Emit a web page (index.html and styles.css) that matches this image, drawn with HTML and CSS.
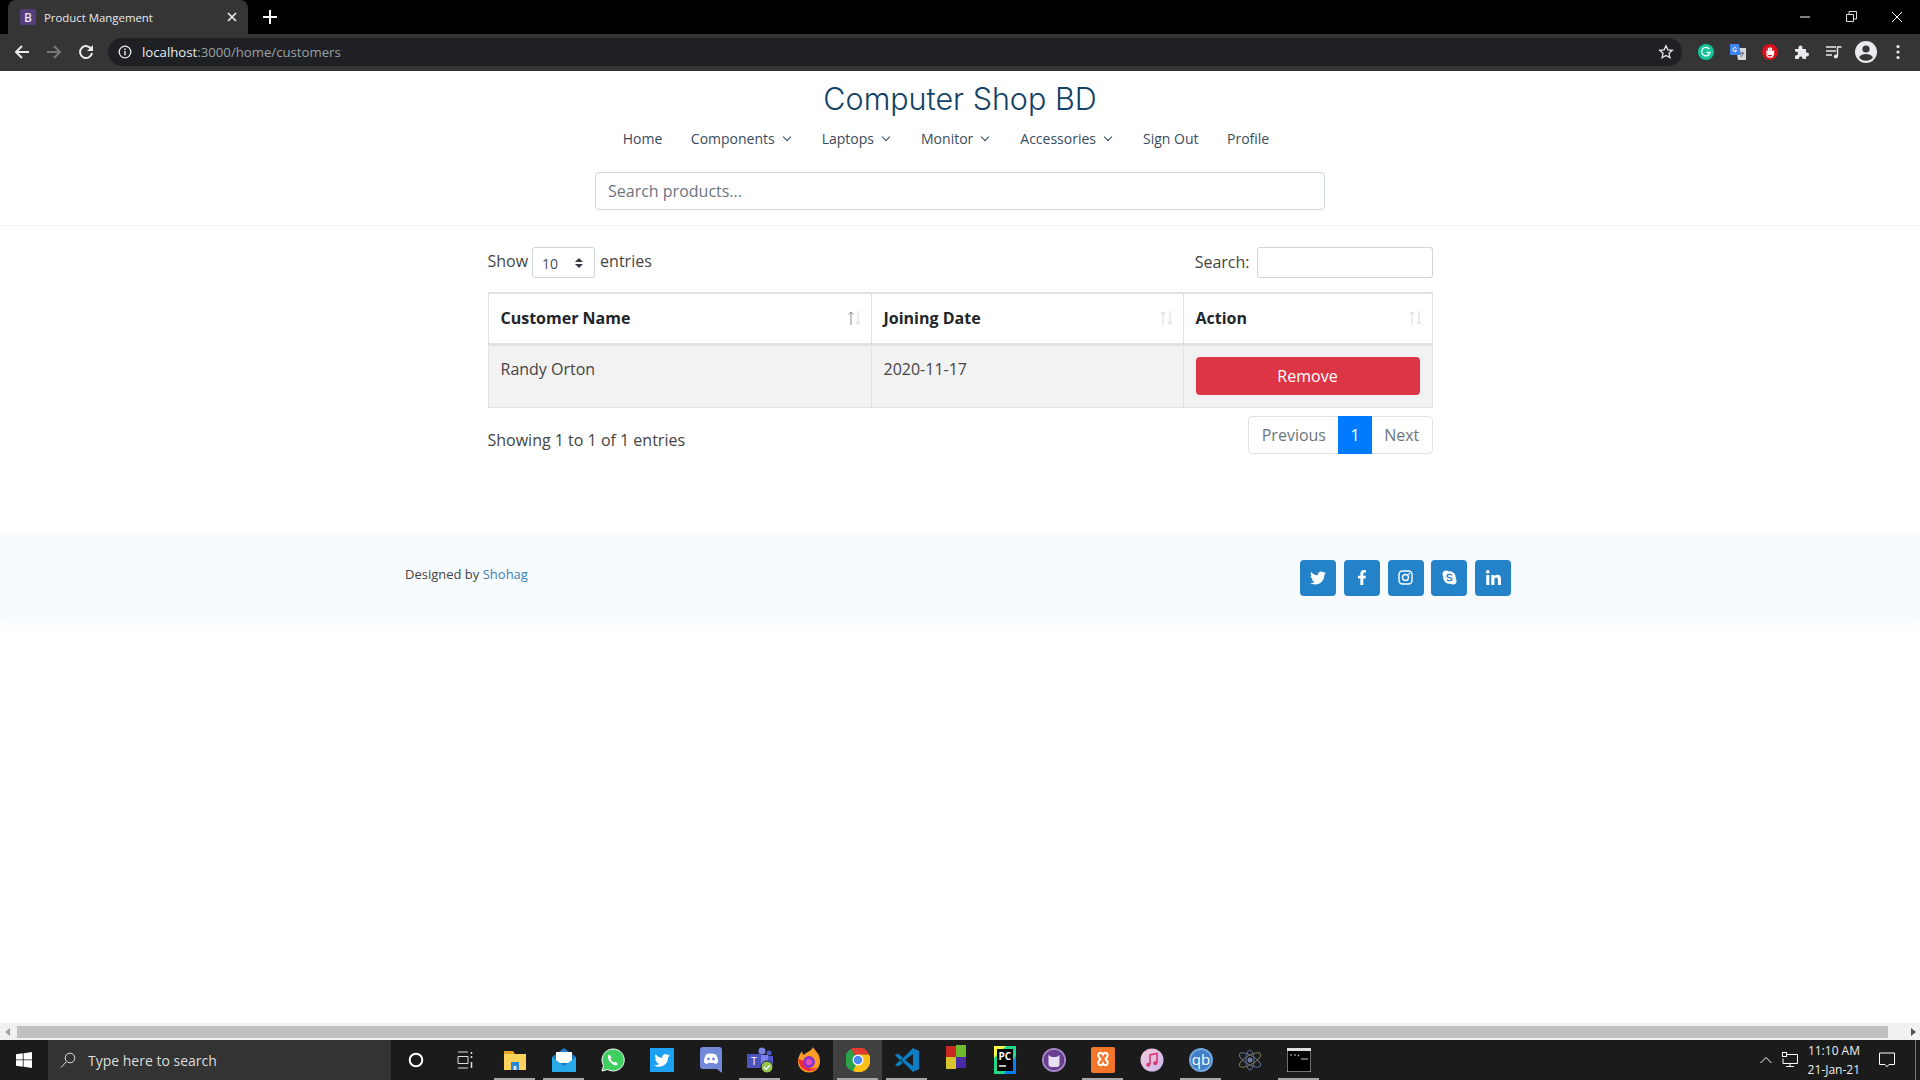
FILE: index.html
```html
<!DOCTYPE html>
<html lang="en">
<head>
    <meta charset="UTF-8">
    <title>Product Mangement</title>
    <link rel="stylesheet" href="styles.css">
</head>
<body>
<div class="screen">
    <!-- browser tabs -->
    <div class="tabstrip">
        <div class="tab">
            <span class="favicon">B</span>
            <span class="tab-title">Product Mangement</span>
            <svg class="tab-close" width="10" height="10" viewBox="0 0 10 10"><path d="M1 1l8 8M9 1l-8 8" stroke="#e8eaed" stroke-width="1.7"/></svg>
        </div>
        <svg class="new-tab" width="14" height="14" viewBox="0 0 14 14"><path d="M7 0v14M0 7h14" stroke="#fff" stroke-width="2"/></svg>
        <div class="window-btns">
            <svg width="46" height="28" viewBox="0 0 46 28"><path d="M18 14h10" stroke="#fff"/></svg>
            <svg width="46" height="28" viewBox="0 0 46 28"><path d="M18.5 18.500h7v-7h-7zM21 11V8.500h7.500v7.500H25.500" fill="none" stroke="#ddd"/></svg>
            <svg width="46" height="28" viewBox="0 0 46 28"><path d="M18 9l10 10M28 9l-10 10" stroke="#fff"/></svg>
        </div>
    </div>

    <!-- browser toolbar -->
    <div class="toolbar">
        <svg class="tool" width="16" height="16" viewBox="0 0 16 16"><path d="M15 8H2M8 2L2 8l6 6" fill="none" stroke="#e8eaed" stroke-width="2"/></svg>
        <svg class="tool" width="16" height="16" viewBox="0 0 16 16"><path d="M1 8h13M8 2l6 6-6 6" fill="none" stroke="#77787a" stroke-width="2"/></svg>
        <svg class="tool" width="16" height="16" viewBox="0 0 16 16"><path d="M13.500 5.500A6 6 0 1 0 14 9" fill="none" stroke="#e8eaed" stroke-width="2"/><path d="M15 1v6H9z" fill="#e8eaed"/></svg>
        <div class="omnibox">
            <svg width="14" height="14" viewBox="0 0 14 14"><circle cx="7" cy="7" r="5.800" fill="none" stroke="#e8eaed" stroke-width="1.300"/><path d="M7 6v4.200M7 3.500v1.500" stroke="#e8eaed" stroke-width="1.500"/></svg>
            <span class="url"><b>localhost</b>:3000/home/customers</span>
            <svg class="star" width="16" height="16" viewBox="0 0 16 16"><path d="M8 1.800l1.900 4 4.400.5-3.300 3 .9 4.400L8 11.500l-3.900 2.200.9-4.400-3.300-3 4.400-.5z" fill="none" stroke="#e8eaed" stroke-width="1.300"/></svg>
        </div>
        <div class="extensions">
            <svg width="16" height="16" viewBox="0 0 16 16"><circle cx="8" cy="8" r="8" fill="#15c39a"/><path d="M11.300 5.200A4.200 4.200 0 1 0 12 8.500H8.500" fill="none" stroke="#fff" stroke-width="1.300"/></svg>
            <svg width="16" height="16" viewBox="0 0 16 16"><path d="M6 4h10v12H8z" fill="#d5d7da"/><path d="M0 0h9l2 11H0z" fill="#4285f4"/><path d="M6.500 4.500a2 2 0 1 0 .2 2H4.800" fill="none" stroke="#fff"/><path d="M10 9h4M12 8v1M11 13l2.500-4" stroke="#666"/></svg>
            <svg width="16" height="16" viewBox="0 0 16 16"><circle cx="8" cy="8" r="8" fill="#d8121c"/><path d="M5 6.500v3.500c0 2 1.200 3.200 3.200 3.200S11 12 11.500 10V6.500M6.500 8V4M8 8V3.200M9.500 8V3.800" stroke="#fff" stroke-width="1.300" fill="none"/><path d="M5.500 7h5.500v4H6z" fill="#fff"/></svg>
            <svg width="16" height="16" viewBox="0 0 16 16"><path d="M1 5h3.500V3.500a2 2 0 0 1 4 0V5H12v3.500h1a2 2 0 0 1 0 4h-1V15H8.500v-1.200a1.800 1.800 0 0 0-3.500 0V15H1v-3.500h1a2 2 0 0 0 0-4H1z" fill="#e8eaed"/></svg>
            <svg width="16" height="16" viewBox="0 0 16 16"><path d="M0 3h10M0 7h10M0 11h6" stroke="#e8eaed" stroke-width="1.400"/><path d="M11.500 12.500V3h4" fill="none" stroke="#e8eaed" stroke-width="1.400"/><circle cx="9.800" cy="12.500" r="2" fill="#e8eaed"/></svg>
            <svg class="avatar" width="22" height="22" viewBox="0 0 22 22"><circle cx="11" cy="11" r="11" fill="#e8eaed"/><circle cx="11" cy="8" r="3.600" fill="#353535"/><path d="M4 16.500c1.500-2.800 4.500-3.600 7-3.600s5.500.8 7 3.600c-1.600 2-4.200 3.300-7 3.300s-5.400-1.300-7-3.300z" fill="#353535"/></svg>
            <svg width="16" height="16" viewBox="0 0 16 16"><circle cx="8" cy="2.500" r="1.600" fill="#e8eaed"/><circle cx="8" cy="8" r="1.600" fill="#e8eaed"/><circle cx="8" cy="13.500" r="1.600" fill="#e8eaed"/></svg>
        </div>
    </div>

    <div class="page">
        <header class="site-header">
            <h1 class="logo">Computer Shop BD</h1>
            <nav class="site-nav">
                <a>Home</a>
                <a class="drop">Components</a>
                <a class="drop">Laptops</a>
                <a class="drop">Monitor</a>
                <a class="drop">Accessories</a>
                <a>Sign Out</a>
                <a>Profile</a>
            </nav>
            <input class="product-search" type="text" placeholder="Search products...">
        </header>

        <main class="customers">
            <div class="dt-top">
                <label class="dt-length">Show
                    <span class="select-wrap">
                        <select><option>10</option></select>
                    </span>
                    entries</label>
                <label class="dt-filter">Search: <input type="text"></label>
            </div>
            <table class="dt-table">
                <thead>
                    <tr>
                        <th class="col-name"><div class="th-in">Customer Name
                            <svg class="sort" width="13" height="14" viewBox="0 0 13 14"><path class="on" d="M3 14V1M.7 3.500L3 1l2.300 2.500"/><path d="M10 0v13M7.700 10.500L10 13l2.300-2.500"/></svg>
                        </div></th>
                        <th class="col-date"><div class="th-in">Joining Date
                            <svg class="sort" width="13" height="14" viewBox="0 0 13 14"><path d="M3 14V1M.7 3.500L3 1l2.300 2.500"/><path d="M10 0v13M7.700 10.500L10 13l2.300-2.500"/></svg>
                        </div></th>
                        <th><div class="th-in">Action
                            <svg class="sort" width="13" height="14" viewBox="0 0 13 14"><path d="M3 14V1M.7 3.500L3 1l2.300 2.500"/><path d="M10 0v13M7.700 10.500L10 13l2.300-2.500"/></svg>
                        </div></th>
                    </tr>
                </thead>
                <tbody>
                    <tr>
                        <td>Randy Orton</td>
                        <td>2020-11-17</td>
                        <td><button class="btn-remove">Remove</button></td>
                    </tr>
                </tbody>
            </table>
            <div class="dt-bottom">
                <div class="dt-info">Showing 1 to 1 of 1 entries</div>
                <ul class="pagination">
                    <li>Previous</li>
                    <li class="active">1</li>
                    <li>Next</li>
                </ul>
            </div>
        </main>

        <footer class="site-footer">
            <div class="footer-in">
                <div class="credits">Designed by <a>Shohag</a></div>
                <div class="social">
                    <a><svg width="16" height="16" viewBox="0 0 512 512"><path d="M459.37 151.716c.325 4.548.325 9.097.325 13.645 0 138.72-105.583 298.558-298.558 298.558-59.452 0-114.68-17.219-161.137-47.106 8.447.974 16.568 1.299 25.34 1.299 49.055 0 94.213-16.568 130.274-44.832-46.132-.975-84.792-31.188-98.112-72.772 6.498.974 12.995 1.624 19.818 1.624 9.421 0 18.843-1.3 27.614-3.573-48.081-9.747-84.143-51.98-84.143-102.985v-1.299c13.969 7.797 30.214 12.67 47.431 13.319-28.264-18.843-46.781-51.005-46.781-87.391 0-19.492 5.197-37.36 14.294-52.954 51.655 63.675 129.3 105.258 216.365 109.807-1.624-7.797-2.599-15.918-2.599-24.04 0-57.828 46.782-104.934 104.934-104.934 30.213 0 57.502 12.67 76.67 33.137 23.715-4.548 46.456-13.32 66.599-25.34-7.798 24.366-24.366 44.833-46.132 57.827 21.117-2.273 41.584-8.122 60.426-16.243-14.292 20.791-32.161 39.308-52.628 54.253z" fill="#fff"/></svg></a>
                    <a><svg width="10" height="15" viewBox="0 0 320 512"><path d="M279.14 288l14.22-92.66h-88.91v-60.13c0-25.35 12.42-50.06 52.24-50.06h40.42V6.26S260.43 0 225.36 0c-73.22 0-121.08 44.38-121.08 124.72v70.62H22.89V288h81.39v224h100.17V288z" fill="#fff"/></svg></a>
                    <a><svg width="15" height="15" viewBox="0 0 15 15"><rect x="1" y="1" width="13" height="13" rx="3.500" fill="none" stroke="#fff" stroke-width="1.400"/><circle cx="7.500" cy="7.500" r="3" fill="none" stroke="#fff" stroke-width="1.400"/><circle cx="11.300" cy="3.700" r=".9" fill="#fff"/></svg></a>
                    <a><svg width="15" height="15" viewBox="0 0 15 15"><circle cx="7.500" cy="7.500" r="6.300" fill="#fff"/><circle cx="4" cy="4" r="3.500" fill="#fff"/><circle cx="11" cy="11" r="3.500" fill="#fff"/><path d="M10 5.300C9 4.200 5 4 5 6c0 2.200 5 1 5 3.200 0 1.900-4 1.800-5.100.5" fill="none" stroke="#2482c9" stroke-width="1.300"/></svg></a>
                    <a><svg width="15" height="15" viewBox="0 0 448 448"><path d="M100.28 448H7.4V148.9h92.88zM53.79 108.1C24.09 108.1 0 83.5 0 53.8a53.79 53.79 0 0 1 107.58 0c0 29.7-24.1 54.3-53.79 54.3zM447.9 448h-92.68V302.4c0-34.7-.7-79.2-48.29-79.2-48.29 0-55.69 37.7-55.69 76.7V448h-92.78V148.9h89.08v40.8h1.3c12.4-23.5 42.69-48.3 87.88-48.3 94 0 111.28 61.9 111.28 142.3V448z" fill="#fff"/></svg></a>
                </div>
            </div>
        </footer>
    </div>

    <div class="hscroll">
        <span class="arrow-l"></span>
        <div class="hscroll-thumb"></div>
        <span class="arrow-r"></span>
    </div>

    <!-- windows taskbar -->
    <div class="taskbar">
        <svg class="win-logo" width="16" height="16" viewBox="0 0 16 16"><path d="M0 2.300l6.800-1v6.200H0zM7.600 1.200L16 0v7.500H7.600zM0 8.300h6.800v6.400l-6.800-1zM7.600 8.300H16V16l-8.400-1.200z" fill="#fff"/></svg>
        <div class="task-search">
            <svg width="16" height="16" viewBox="0 0 16 16"><circle cx="10" cy="6" r="4.800" fill="none" stroke="#ddd"/><path d="M6.500 9.500L1 15.500" stroke="#ddd"/></svg>
            <span>Type here to search</span>
        </div>
        <div class="task-sys">
            <svg width="16" height="16" viewBox="0 0 16 16"><circle cx="8" cy="8" r="6.300" fill="none" stroke="#fff" stroke-width="2"/></svg>
        </div>
        <div class="task-sys">
            <svg width="16" height="18" viewBox="0 0 16 18"><path d="M1 1h10M1 17h10M1 5.500h10v7H1z" fill="none" stroke="#ddd"/><path d="M14.500 1v2M14.500 5v2M14.500 11v6" stroke="#ddd" stroke-width="1.500"/></svg>
        </div>
        <div class="task-apps">
            <div class="app run"><svg width="24" height="24" viewBox="0 0 24 24"><path d="M1 3h9l2 3H1z" fill="#e8a825"/><path d="M1 6h22v16H1z" fill="#fbd35c"/><path d="M8 14h8v8H8z" fill="#2a86d8"/><path d="M10.500 18h3v4h-3z" fill="#cbe4f6"/></svg></div>
            <div class="app run"><svg width="26" height="24" viewBox="0 0 26 24"><path d="M13 0L1 9v15h24V9z" fill="#1f7ac2"/><path d="M5 4h16v11H5z" fill="#fff"/><path d="M1 9l12 9 12-9v15H1z" fill="#29a8ea"/></svg></div>
            <div class="app"><svg width="24" height="24" viewBox="0 0 24 24"><path d="M12 1a11 11 0 0 0-9.500 16.500L1 23l5.700-1.500A11 11 0 1 0 12 1z" fill="#3ecf5e" stroke="#fff"/><path d="M8 6.500c-2 2-1 5 1.500 7.800s5.500 4 7.500 2l-2.200-2.500-1.800.8c-1.500-.8-2.800-2.200-3.500-3.800l1-1.600z" fill="#fff"/></svg></div>
            <div class="app"><svg width="24" height="24" viewBox="0 0 24 24"><rect width="24" height="24" fill="#1da1f2"/><path d="M20 7.500c-.6.300-1.200.4-1.800.5.700-.4 1.200-1 1.400-1.800-.6.400-1.300.7-2 .8a3.200 3.200 0 0 0-5.400 2.900A9 9 0 0 1 5.600 6.600a3.200 3.200 0 0 0 1 4.200c-.5 0-1-.2-1.400-.4 0 1.600 1.100 2.900 2.500 3.200-.5.100-1 .1-1.400 0 .4 1.300 1.600 2.200 3 2.200A6.400 6.400 0 0 1 4 17.200 9 9 0 0 0 18 9.200c.8-.4 1.500-1 2-1.700z" fill="#fff"/></svg></div>
            <div class="app"><svg width="22" height="26" viewBox="0 0 22 26"><path d="M3 0h16a3 3 0 0 1 3 3v23l-5-4H3a3 3 0 0 1-3-3V3a3 3 0 0 1 3-3z" fill="#7289da"/><path d="M6 7.500c3-1.400 7-1.400 10 0 1.500 2.500 2 5 2 8-1 .8-2.200 1.200-3.300 1.500l-.8-1.300c-1.800.5-3.900.5-5.800 0L7.300 17C6.200 16.700 5 16.300 4 15.500c0-3 .5-5.500 2-8z" fill="#fff"/><circle cx="8.500" cy="12" r="1.400" fill="#7289da"/><circle cx="13.500" cy="12" r="1.400" fill="#7289da"/></svg></div>
            <div class="app run"><svg width="28" height="28" viewBox="0 0 28 28"><circle cx="16" cy="5" r="3.500" fill="#7b83eb"/><circle cx="23" cy="7" r="2.500" fill="#5059c9"/><path d="M10 9h12v13H10z" fill="#7b83eb"/><path d="M22 10h5v9h-5z" fill="#5059c9"/><rect x="1" y="8" width="14" height="14" fill="#4b53bc"/><text class="ico-t" x="8" y="19" text-anchor="middle" font-size="11">T</text><circle cx="21" cy="21" r="6" fill="#92c353" stroke="#1b1b1b"/><path d="M18 21l2.200 2.200 3.800-4" fill="none" stroke="#fff" stroke-width="1.400"/></svg></div>
            <div class="app"><svg width="24" height="26" viewBox="0 0 24 26"><path d="M16 0c1 3 7 6 7 14a11 11 0 0 1-22 1C1 9 4 6 5 4c0 2 1 3 2 4 2-3 8-4 9-8z" fill="#ff9c25"/><path d="M1.500 12c0 7 5 12 11 12 3 0 6-1 8-4-3 2-6 2-8 1-3-1-4-4-3-6z" fill="#f5273f"/><circle cx="12" cy="15" r="6" fill="#8b33c4"/><circle cx="12" cy="15" r="3" fill="#e34fbb"/></svg></div>
            <div class="app run current"><svg width="24" height="24" viewBox="0 0 24 24"><path d="M12 12L5 1a12 12 0 0 1 18 5.500H12z" fill="#e33b2e"/><path d="M12 12L5 1A12 12 0 0 0 7 23l5-11z" fill="#2ba14b"/><path d="M12 6.500h11A12 12 0 0 1 7 23l5-11z" fill="#fbc116"/><circle cx="12" cy="12" r="5.500" fill="#fff"/><circle cx="12" cy="12" r="4.300" fill="#4a8af4"/></svg></div>
            <div class="app run"><svg width="26" height="26" viewBox="0 0 26 26"><path d="M19 1L7 13l12 12 6-3V4z" fill="#0b7ec4"/><path d="M19 7v12l-8-6z" fill="#1b1b1b"/><path d="M1 8l3-1.500 5 4-3 3zM6 13.500l3 2.500-5 3.500L1 18z" fill="#0b7ec4"/></svg></div>
            <div class="app"><svg width="22" height="30" viewBox="0 0 22 30"><path d="M1 1h10v11H1z" fill="#c8281f"/><path d="M11 0h10v12H11z" fill="#6fbb2d"/><path d="M1 12h10v12H1z" fill="#d6c52b"/><path d="M11 12h10v11H11z" fill="#4b2aa8"/></svg></div>
            <div class="app"><svg width="22" height="28" viewBox="0 0 22 28"><path d="M0 0h22v28H0z" fill="#21d789"/><path d="M0 0h12L0 12z" fill="#fcf84a"/><path d="M22 10v18H10z" fill="#087cfa"/><rect x="3" y="3" width="16" height="22" fill="#000"/><text class="ico-t" x="4.500" y="14" font-size="10" font-weight="700">PC</text><path d="M5 20h7" stroke="#fff" stroke-width="1.500"/></svg></div>
            <div class="app"><svg width="24" height="24" viewBox="0 0 24 24"><circle cx="12" cy="12" r="11" fill="#1b1b1b" stroke="#a987c9" stroke-width="2"/><circle cx="12" cy="12" r="10" fill="#6a3f94"/><path d="M6.500 7l3 2h5l3-2v9a3 3 0 0 1-3 3h-5a3 3 0 0 1-3-3z" fill="#e9e0f1"/></svg></div>
            <div class="app run"><svg width="24" height="28" viewBox="0 0 24 28"><rect y="1" width="24" height="26" rx="2" fill="#f3772a"/><path d="M8 7.500a2.500 2.500 0 0 1 4 1 2.500 2.500 0 0 1 4-1c1.500 1.500.5 3.500-1.500 5.500 2 2 3 4 1.500 5.500a2.500 2.500 0 0 1-4-1 2.500 2.500 0 0 1-4 1c-1.500-1.500-.5-3.500 1.500-5.500-2-2-3-4-1.500-5.500z" fill="none" stroke="#fff" stroke-width="2"/></svg></div>
            <div class="app"><svg width="24" height="24" viewBox="0 0 24 24"><defs><linearGradient id="tunes" x1="0" y1="0" x2="1" y2="1"><stop offset="0" stop-color="#f9c8d8"/><stop offset="1" stop-color="#c9b8f0"/></linearGradient></defs><circle cx="12" cy="12" r="11.500" fill="url(#tunes)"/><path d="M10 16.500V7l7-1.500V15" fill="none" stroke="#d9366e" stroke-width="1.600"/><circle cx="8.300" cy="16.700" r="2" fill="#d9366e"/><circle cx="15.300" cy="15.200" r="2" fill="#d9366e"/></svg></div>
            <div class="app run"><svg width="24" height="24" viewBox="0 0 24 24"><circle cx="12" cy="12" r="12" fill="#72a5dc"/><circle cx="12" cy="12" r="10" fill="#3f7fc8"/><text class="ico-t" x="12" y="17" text-anchor="middle" font-size="15">qb</text></svg></div>
            <div class="app"><svg width="26" height="24" viewBox="0 0 26 24" fill="none"><ellipse cx="13" cy="12" rx="12" ry="4.500" stroke="#5f6c96" transform="rotate(30 13 12)"/><ellipse cx="13" cy="12" rx="12" ry="4.500" stroke="#7c7a50" transform="rotate(-30 13 12)"/><ellipse cx="13" cy="12" rx="4" ry="10" stroke="#5f6c96"/><circle cx="13" cy="12" r="2.500" fill="#7078a8"/></svg></div>
            <div class="app run"><svg width="24" height="24" viewBox="0 0 24 24"><rect width="24" height="24" fill="#000" stroke="#ddd"/><rect width="24" height="3" fill="#ddd"/><path d="M3 7h2M7 7h2M11 7l1 1M14 11h7" stroke="#ccc" stroke-width="1.200"/></svg></div>
        </div>
        <div class="tray">
            <svg width="12" height="8" viewBox="0 0 12 8"><path d="M.5 7L6 1.500 11.500 7" fill="none" stroke="#fff"/></svg>
            <svg class="tray-net" width="16" height="16" viewBox="0 0 16 16"><path d="M4.500 2.500H15.500V11.500H1V6.500M8 11.500V14.500M4 14.500H12" fill="none" stroke="#fff"/><rect x=".5" y=".5" width="4" height="4" fill="#1b1b1b" stroke="#fff"/></svg>
            <div class="clock"><div>11:10 AM</div><div>21-Jan-21</div></div>
            <svg class="tray-note" width="16" height="16" viewBox="0 0 16 16"><path d="M.5 1h15v11.500H10L8 14.800 6 12.500H.5z" fill="none" stroke="#fff"/></svg>
            <span class="show-desktop"></span>
        </div>
    </div>
</div>
</body>
</html>
```

FILE: styles.css
```css
* {
    box-sizing: border-box;
}
body {
    margin: 0;
    font-family: "Open Sans", sans-serif;
    font-size: 16px;
    color: #444;
    background: #fff;
}
.screen {
    display: flex;
    flex-direction: column;
    width: 1920px;
    height: 1080px;
    overflow: hidden;
}

/* browser */
.tabstrip {
    display: flex;
    align-items: center;
    height: 34px;
    background: #000;
    padding-left: 8px;
}
.tab {
    display: flex;
    align-items: center;
    width: 240px;
    height: 34px;
    padding: 0 11px 0 12px;
    background: #353535;
    border-radius: 8px 8px 0 0;
    color: #e8eaed;
    font-size: 11.400px;
}
.favicon {
    display: flex;
    align-items: center;
    justify-content: center;
    width: 16px;
    height: 16px;
    background: #563d7c;
    border-radius: 2px;
    color: #e8e2f0;
    font-size: 12px;
    font-weight: 600;
}
.tab-title {
    flex: 1;
    margin-left: 8px;
}
.new-tab {
    margin-left: 15px;
}
.window-btns {
    display: flex;
    margin-left: auto;
    margin-right: 0;
}
.toolbar {
    display: flex;
    align-items: center;
    height: 37px;
    padding: 0 0 1px 14px;
    background: #353535;
}
.tool {
    margin-right: 16px;
}
.omnibox {
    display: flex;
    align-items: center;
    width: 1574px;
    height: 28px;
    margin-left: -2px;
    padding: 0 8px 0 10px;
    background: #1f2023;
    border-radius: 14px;
}
.url {
    flex: 1;
    margin-left: 10px;
    color: #9aa0a6;
    font-size: 13.200px;
}
.url b {
    color: #e8eaed;
    font-weight: 400;
}
.extensions {
    display: flex;
    align-items: center;
    gap: 16px;
    margin-left: 16px;
}
.avatar {
    margin: 0 -3px;
}

/* page */
.page {
    flex: 1;
    overflow: hidden;
}
.site-header {
    display: flex;
    flex-direction: column;
    align-items: center;
    height: 155px;
    padding-top: 8px;
    border-bottom: 1px solid #eef0f4;
}
.logo {
    margin: 0;
    height: 40px;
    color: #124265;
    font-family: "Inter", sans-serif;
    font-size: 30.500px;
    font-weight: 300;
    line-height: 40px;
}
.site-nav {
    display: flex;
    align-items: center;
    height: 38px;
    gap: 28.500px;
    padding-right: 28px;
    color: #3a4b5c;
    font-size: 14px;
}
.site-nav .drop {
    display: flex;
    align-items: center;
}
.site-nav .drop::after {
    content: "";
    width: 5px;
    height: 5px;
    margin: -2px 3.500px 0 9px;
    border-right: 1.500px solid #2c4964;
    border-bottom: 1.500px solid #2c4964;
    transform: rotate(45deg);
}
.product-search {
    width: 730px;
    height: 38px;
    margin-top: 15px;
    padding: 0 12px;
    border: 1px solid #ced4da;
    border-radius: 4px;
    font-family: inherit;
    font-size: 16px;
}
.product-search::placeholder {
    color: #6c757d;
}

.customers {
    width: 945px;
    margin: 0 auto;
    padding-top: 21px;
}
.dt-top {
    display: flex;
    justify-content: space-between;
    align-items: center;
    height: 31px;
    margin-bottom: 14px;
}
.dt-length {
    display: flex;
    align-items: flex-start;
    gap: 4px;
    height: 31px;
    line-height: 28px;
}
.select-wrap {
    position: relative;
    display: block;
    width: 63px;
    height: 31px;
    margin-right: 1px;
}
.select-wrap select {
    width: 100%;
    height: 31px;
    padding: 2px 0 0 9px;
    border: 1px solid #ced4da;
    border-radius: 3px;
    background: #fff;
    color: #495057;
    font-family: inherit;
    font-size: 14px;
    appearance: none;
}
.select-wrap::before,
.select-wrap::after {
    content: "";
    position: absolute;
    right: 12px;
    border-left: 4px solid transparent;
    border-right: 4px solid transparent;
}
.select-wrap::before {
    top: 11px;
    border-bottom: 4px solid #343a40;
}
.select-wrap::after {
    top: 17px;
    border-top: 4px solid #343a40;
}
.dt-filter {
    display: flex;
    align-items: flex-start;
    gap: 7px;
    height: 31px;
    line-height: 30px;
}
.dt-filter input {
    width: 176px;
    height: 31px;
    border: 1px solid #ced4da;
    border-radius: 3px;
}
.dt-table {
    width: 945px;
    table-layout: fixed;
    border-collapse: collapse;
}
.col-name {
    width: 383px;
}
.col-date {
    width: 312px;
}
.dt-table th {
    height: 51px;
    padding: 0 10px 0 12px;
    border: 1px solid #dee2e6;
    border-top-width: 2px;
    border-bottom-width: 3px;
    color: #212529;
    font-weight: 700;
    text-align: left;
}
.th-in {
    display: flex;
    justify-content: space-between;
    align-items: center;
}
.sort path {
    fill: none;
    stroke: #d8d8d8;
}
.sort path.on {
    stroke: #8a8a8a;
}
.dt-table td {
    height: 63px;
    padding: 11px 12px 0;
    border: 1px solid #dee2e6;
    background: #f2f2f2;
    vertical-align: top;
    line-height: 24px;
}
.dt-table td:last-child {
    padding: 0 12px;
    vertical-align: middle;
}
.btn-remove {
    display: block;
    width: 100%;
    height: 38px;
    border: 0;
    border-radius: 4px;
    background: #dc3545;
    color: #fff;
    font-family: inherit;
    font-size: 16px;
}
.dt-bottom {
    display: flex;
    justify-content: space-between;
    margin-top: 8px;
}
.dt-info {
    padding-top: 12px;
    line-height: 24px;
}
.pagination {
    display: flex;
    margin: 0;
    padding: 0;
    list-style: none;
    height: 38px;
    color: #6c757d;
    line-height: 36px;
    border: 1px solid #dee2e6;
    border-radius: 4px;
}
.pagination li {
    padding: 0 12.250px;
}
.pagination .active {
    margin: -1px 0;
    background: #007bff;
    color: #fff;
    line-height: 38px;
}

.site-footer {
    height: 88px;
    margin-top: 78px;
    background: #f7fbfe;
    box-shadow: 0 4px 8px rgba(150, 170, 190, .06);
}
.footer-in {
    display: flex;
    justify-content: space-between;
    width: 1140px;
    margin: 0 auto;
    padding: 0 19px 0 15px;
}
.credits {
    padding-top: 33px;
    font-size: 13px;
}
.credits a {
    color: #3a7fb8;
}
.social {
    display: flex;
    gap: 7.750px;
    padding-top: 28px;
}
.social a {
    display: flex;
    align-items: center;
    justify-content: center;
    width: 36px;
    height: 36px;
    background: #2482c9;
    border-radius: 4px;
}

/* scrollbar */
.hscroll {
    display: flex;
    align-items: center;
    height: 17px;
    background: #f1f1f1;
}
.hscroll-thumb {
    width: 1871px;
    height: 12px;
    margin: 0 0 0 6px;
    background: #c1c1c1;
}
.arrow-l,
.arrow-r {
    width: 0;
    height: 0;
    border-top: 4px solid transparent;
    border-bottom: 4px solid transparent;
}
.arrow-l {
    margin-left: 5px;
    border-right: 5px solid #a3a3a3;
    margin-right: 1px;
}
.arrow-r {
    margin-left: 23px;
    border-left: 5px solid #505050;
}

/* taskbar */
.taskbar {
    display: flex;
    align-items: center;
    height: 40px;
    background: #1b1b1b;
    color: #fff;
}
.win-logo {
    margin: 0 16px;
}
.task-search {
    display: flex;
    align-items: center;
    gap: 12px;
    width: 343px;
    height: 40px;
    padding-left: 12px;
    background: #333;
    color: #ddd;
    font-size: 14px;
}
.task-sys {
    display: flex;
    align-items: center;
    justify-content: center;
    width: 49px;
    height: 40px;
}
.task-apps {
    display: flex;
    height: 40px;
    margin-left: 1px;
}
.app {
    position: relative;
    display: flex;
    align-items: center;
    justify-content: center;
    width: 49px;
    height: 40px;
}
.app.current {
    background: #404040;
}
.app.run::after {
    content: "";
    position: absolute;
    left: 4px;
    right: 4px;
    bottom: 0;
    height: 2px;
    background: #a8a8a8;
}
.ico-t {
    fill: #fff;
    font-family: "Open Sans", sans-serif;
}
.tray {
    position: relative;
    display: flex;
    align-items: center;
    flex: 1;
    justify-content: flex-end;
    height: 40px;
    padding-right: 25px;
}
.tray-net {
    margin-left: 10px;
}
.clock {
    width: 54px;
    margin: 0 19px 0 8px;
    font-size: 12px;
    line-height: 19px;
    text-align: right;
    color: #eee;
}
.show-desktop {
    position: absolute;
    right: 4px;
    top: 0;
    width: 1px;
    height: 40px;
    background: #777;
}
```
